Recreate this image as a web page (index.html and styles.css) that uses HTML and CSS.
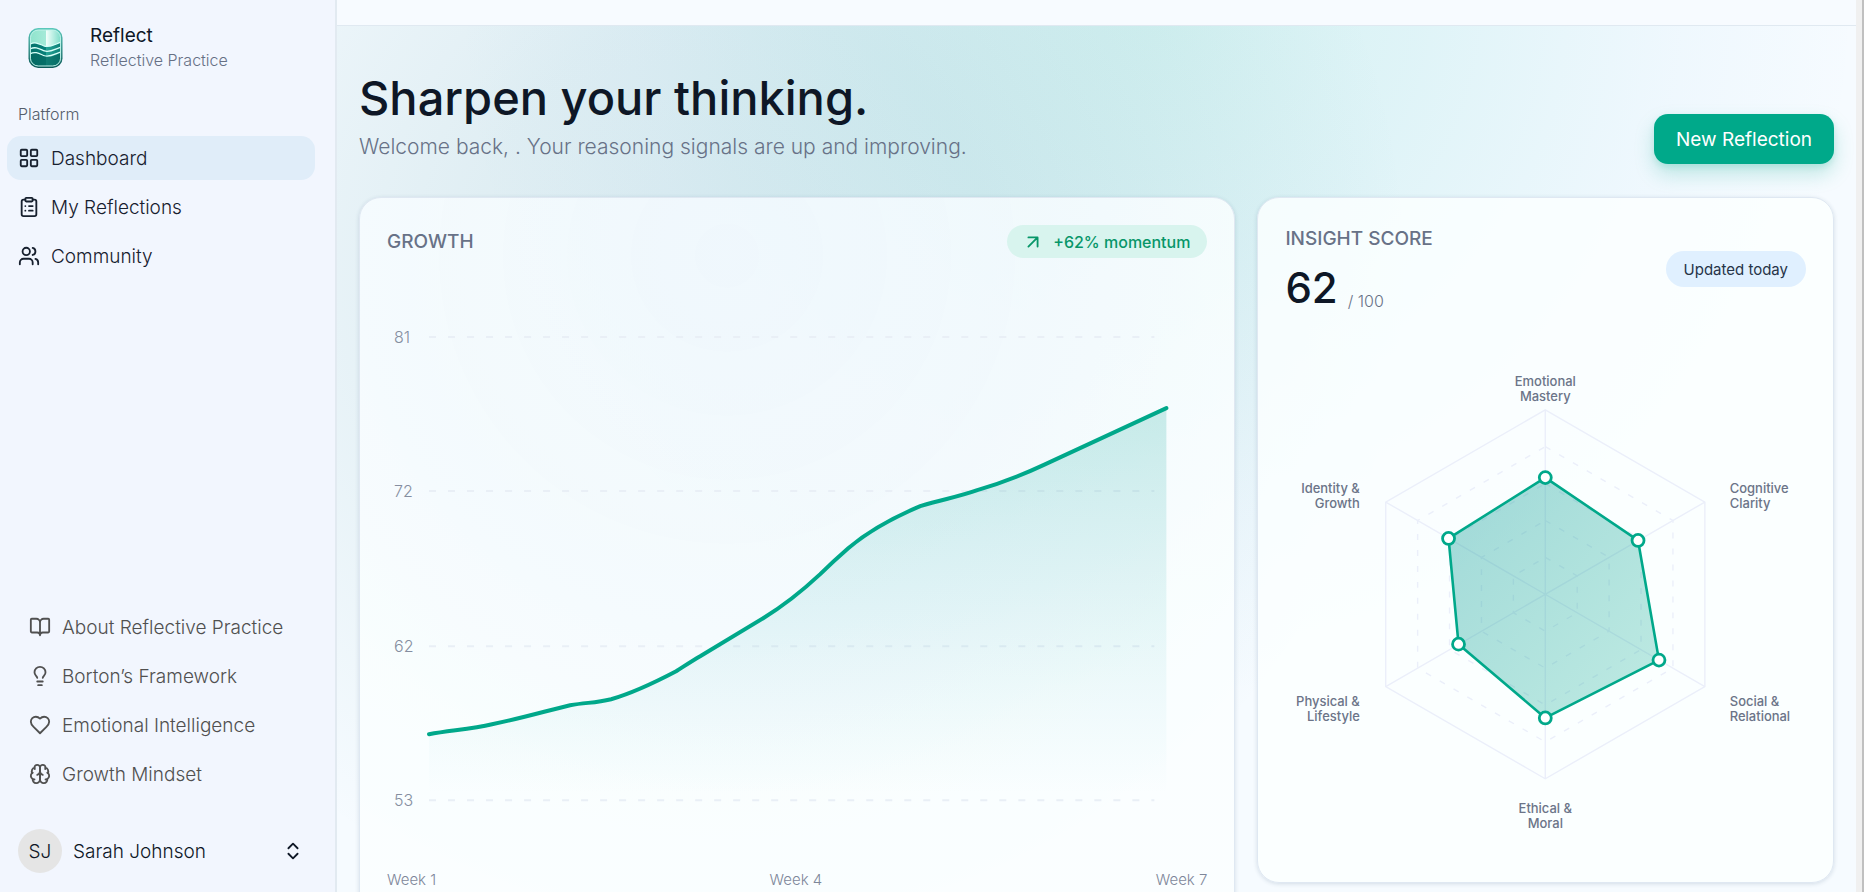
FILE: index.html
```html
<!DOCTYPE html>
<html lang="en">
<head>
<meta charset="utf-8">
<meta name="viewport" content="width=device-width, initial-scale=1">
<title>Reflect – Dashboard</title>
<link rel="stylesheet" href="styles.css">
</head>
<body>
<div class="app">
  <aside class="sidebar">
    <div class="brand">
      <svg class="brand-logo" viewBox="0 0 36 42" aria-hidden="true">
        <defs>
          <linearGradient id="frame" x1="0" y1="0" x2="0" y2="1"><stop offset="0" stop-color="#5cc9bc"/><stop offset="1" stop-color="#0a5a58"/></linearGradient>
          <linearGradient id="sky" x1="0" y1="0" x2="1" y2="0"><stop offset="0" stop-color="#8fe3cc"/><stop offset=".5" stop-color="#a4ead8"/><stop offset=".52" stop-color="#f2fffb"/><stop offset="1" stop-color="#7bdcc8"/></linearGradient>
          <linearGradient id="sea" x1="0" y1="0" x2="1" y2="0"><stop offset="0" stop-color="#05716a"/><stop offset=".5" stop-color="#07817a"/><stop offset=".52" stop-color="#26a497"/><stop offset="1" stop-color="#0b8077"/></linearGradient>
          <clipPath id="pane"><rect x="2.500" y="2.500" width="31" height="37" rx="8"/></clipPath>
        </defs>
        <rect x=".5" y=".5" width="35" height="41" rx="10" fill="url(#frame)"/>
        <g clip-path="url(#pane)">
          <rect x="2" y="2" width="32" height="38" fill="url(#sky)"/>
          <path d="M2 17c6-3 10 0 15 2s11-2 17-4v26H2z" fill="url(#sea)"/>
          <path d="M2 28c6-3 10-1 15 1s11 0 17-3v15H2z" fill="#056660" opacity=".65"/>
          <g fill="none" stroke="#d9fff8" stroke-width="1.300">
            <path d="M2 17c6-3 10 0 15 2s11-2 17-4"/>
            <path d="M2 22c6-3 10 0 15 2s11-2 17-4"/>
            <path d="M2 27c6-3 10 0 15 2s11-2 17-4"/>
          </g>
        </g>
        <rect x="2.500" y="2.500" width="31" height="37" rx="8" fill="none" stroke="#c3f4eb" stroke-width="1"/>
      </svg>
      <div class="brand-text">
        <div class="brand-name">Reflect</div>
        <div class="brand-tag">Reflective Practice</div>
      </div>
    </div>

    <div class="nav-label">Platform</div>
    <nav class="nav" aria-label="Platform">
      <a class="nav-item active" href="#dashboard">
        <svg class="icon" viewBox="0 0 24 24"><rect x="3" y="3" width="7" height="7" rx="1"/><rect x="14" y="3" width="7" height="7" rx="1"/><rect x="14" y="14" width="7" height="7" rx="1"/><rect x="3" y="14" width="7" height="7" rx="1"/></svg>
        Dashboard
      </a>
      <a class="nav-item" href="#reflections">
        <svg class="icon" viewBox="0 0 24 24"><rect x="8" y="2" width="8" height="4" rx="1"/><path d="M16 4h2a2 2 0 0 1 2 2v14a2 2 0 0 1-2 2H6a2 2 0 0 1-2-2V6a2 2 0 0 1 2-2h2M12 11h4M12 16h4M8 11h.01M8 16h.01"/></svg>
        My Reflections
      </a>
      <a class="nav-item" href="#community">
        <svg class="icon" viewBox="0 0 24 24"><path d="M16 21v-2a4 4 0 0 0-4-4H6a4 4 0 0 0-4 4v2"/><circle cx="9" cy="7" r="4"/><path d="M22 21v-2a4 4 0 0 0-3-3.870M16 3.130a4 4 0 0 1 0 7.750"/></svg>
        Community
      </a>
    </nav>

    <nav class="nav nav-secondary" aria-label="Resources">
      <a class="nav-item" href="#about">
        <svg class="icon" viewBox="0 0 24 24"><path d="M12 7v14M3 18a1 1 0 0 1-1-1V4a1 1 0 0 1 1-1h5a4 4 0 0 1 4 4 4 4 0 0 1 4-4h5a1 1 0 0 1 1 1v13a1 1 0 0 1-1 1h-6a3 3 0 0 0-3 3 3 3 0 0 0-3-3z"/></svg>
        About Reflective Practice
      </a>
      <a class="nav-item" href="#borton">
        <svg class="icon" viewBox="0 0 24 24"><path d="M15 14c.2-1 .7-1.700 1.500-2.500 1-.9 1.500-2.200 1.500-3.500A6 6 0 0 0 6 8c0 1 .2 2.200 1.500 3.500.7.7 1.300 1.500 1.500 2.500M9 18h6M10 22h4"/></svg>
        Borton’s Framework
      </a>
      <a class="nav-item" href="#emotional">
        <svg class="icon" viewBox="0 0 24 24"><path d="M19 14c1.490-1.460 3-3.210 3-5.500A5.500 5.500 0 0 0 16.500 3c-1.760 0-3 .5-4.500 2-1.500-1.500-2.740-2-4.500-2A5.500 5.500 0 0 0 2 8.500c0 2.300 1.500 4.050 3 5.500l7 7Z"/></svg>
        Emotional Intelligence
      </a>
      <a class="nav-item" href="#growth">
        <svg class="icon" viewBox="0 0 24 24"><path d="M12 5a3 3 0 1 0-5.997.125 4 4 0 0 0-2.526 5.770 4 4 0 0 0 .556 6.588A4 4 0 1 0 12 18Z"/><path d="M12 5a3 3 0 1 1 5.997.125 4 4 0 0 1 2.526 5.770 4 4 0 0 1-.556 6.588A4 4 0 1 1 12 18Z"/><path d="M15 13a4.500 4.500 0 0 1-3-4 4.500 4.500 0 0 1-3 4M17.599 6.500a3 3 0 0 0 .399-1.375M6.003 5.125A3 3 0 0 0 6.401 6.500M3.477 10.896a4 4 0 0 1 .585-.396M19.938 10.500a4 4 0 0 1 .585.396M6 18a4 4 0 0 1-1.967-.516M19.967 17.484A4 4 0 0 1 18 18"/></svg>
        Growth Mindset
      </a>
    </nav>

    <button class="user" type="button">
      <span class="avatar">SJ</span>
      <span class="user-name">Sarah Johnson</span>
      <svg class="icon" viewBox="0 0 24 24"><path d="m7 15 5 5 5-5M7 9l5-5 5 5"/></svg>
    </button>
  </aside>

  <main class="main">
    <div class="topbar"></div>
    <div class="content">
      <header class="hero">
        <div>
          <h1 class="hero-title">Sharpen your thinking.</h1>
          <p class="hero-sub">Welcome back, . Your reasoning signals are up and improving.</p>
        </div>
        <button class="cta" type="button">New Reflection</button>
      </header>

      <div class="cards">
        <section class="card card-growth">
          <div class="card-head">
            <h2 class="card-title">GROWTH</h2>
            <span class="pill pill-green">
              <svg class="pill-icon" viewBox="0 0 24 24"><path d="M7 7h10v10M7 17 17 7"/></svg>
              +62% momentum
            </span>
          </div>
          <svg class="growth-chart" viewBox="0 0 820 604" role="img" aria-label="Growth over seven weeks">
            <defs>
              <linearGradient id="area" x1="0" y1="0" x2="0" y2="1"><stop offset="0" stop-color="#00a08f" stop-opacity=".19"/><stop offset="1" stop-color="#20a8c0" stop-opacity="0"/></linearGradient>
            </defs>
            <g class="grid-lines"><path d="M42 72H767M42 226H767M42 381H767M42 535H767"/></g>
            <g class="axis-text"><text x="7" y="78">81</text><text x="7" y="232">72</text><text x="7" y="387">62</text><text x="7" y="541">53</text></g>
            <path fill="url(#area)" d="M42 469C64 465 84 464 105 459C135 453 158 446 183 440C200 437 208 438 224 434C248 427 270 416 289 406C300 399 306 395 313 391L376 353Q404 336 433 309Q446 296 461 283C480 267 507 252 533 241C556 234 570 232 590 225Q624 215 656 200L779 143V530H42Z"/>
            <path class="growth-line" d="M42 469C64 465 84 464 105 459C135 453 158 446 183 440C200 437 208 438 224 434C248 427 270 416 289 406C300 399 306 395 313 391L376 353Q404 336 433 309Q446 296 461 283C480 267 507 252 533 241C556 234 570 232 590 225Q624 215 656 200L779 143"/>
          </svg>
          <div class="weeks"><span>Week 1</span><span>Week 4</span><span>Week 7</span></div>
        </section>

        <section class="card">
          <div class="card-head">
            <div>
              <h2 class="card-title">INSIGHT SCORE</h2>
              <div class="score"><span class="score-value">62</span><span class="score-max">/ 100</span></div>
            </div>
            <span class="pill pill-blue">Updated today</span>
          </div>
          <svg class="radar" viewBox="-261 -261 522 522" role="img" aria-label="Insight score by dimension">
            <defs>
              <linearGradient id="radarFill" x1="0" y1="0" x2="1" y2="1"><stop offset="0" stop-color="#0c9a98" stop-opacity=".38"/><stop offset="1" stop-color="#00a88a" stop-opacity=".24"/></linearGradient>
            </defs>
            <g class="radar-grid">
              <polygon points="0,-185 160,-92.500 160,92.500 0,185 -160,92.500 -160,-92.500"/>
              <path d="M0-185V185M160-92.500-160 92.500M160 92.500-160-92.500"/>
              <g class="radar-rings">
                <polygon points="0,-148 128,-74 128,74 0,148 -128,74 -128,-74"/>
                <polygon points="0,-111 96,-55.500 96,55.500 0,111 -96,55.500 -96,-55.500"/>
                <polygon points="0,-74 64,-37 64,37 0,74 -64,37 -64,-37"/>
                <polygon points="0,-37 32,-18.500 32,18.500 0,37 -32,18.500 -32,-18.500"/>
              </g>
            </g>
            <polygon class="radar-shape" fill="url(#radarFill)" points="0,-117 93,-54 114,66 0,124 -87,50 -97,-56"/>
            <g class="radar-dots"><circle cx="0" cy="-117" r="6"/><circle cx="93" cy="-54" r="6"/><circle cx="114" cy="66" r="6"/><circle cx="0" cy="124" r="6"/><circle cx="-87" cy="50" r="6"/><circle cx="-97" cy="-56" r="6"/></g>
            <g class="radar-text">
              <text text-anchor="middle"><tspan x="0" y="-209">Emotional</tspan><tspan x="0" y="-194">Mastery</tspan></text>
              <text><tspan x="185" y="-102">Cognitive</tspan><tspan x="185" y="-87">Clarity</tspan></text>
              <text><tspan x="185" y="112">Social &amp;</tspan><tspan x="185" y="127">Relational</tspan></text>
              <text text-anchor="middle"><tspan x="0" y="219">Ethical &amp;</tspan><tspan x="0" y="234">Moral</tspan></text>
              <text text-anchor="end"><tspan x="-186" y="112">Physical &amp;</tspan><tspan x="-186" y="127">Lifestyle</tspan></text>
              <text text-anchor="end"><tspan x="-186" y="-102">Identity &amp;</tspan><tspan x="-186" y="-87">Growth</tspan></text>
            </g>
          </svg>
        </section>
      </div>
    </div>
  </main>
  <div class="scroll-track"></div>
</div>
</body>
</html>
```
FILE: styles.css
```css
* { box-sizing: border-box; }

body {
  margin: 0;
  font-family: Inter, "Open Sans", sans-serif;
  font-weight: 300;
  color: #0e1726;
  background: #f6fbff;
}

h1, h2, p { margin: 0; }

button {
  font: inherit;
  color: inherit;
  border: 0;
  background: none;
  cursor: pointer;
}

.app {
  display: flex;
  height: 100vh;
  overflow: hidden;
}

/* Sidebar */

.sidebar {
  display: flex;
  flex-direction: column;
  flex: 0 0 337px;
  padding: 21px 20px 19px 7px;
  background: #f2f6fe;
  border-right: 2px solid #e2eaf1;
}

.brand {
  display: flex;
  align-items: flex-end;
  gap: 27px;
  padding: 0 21px;
}

.brand-logo { width: 35px; height: 42px; margin-bottom: 1px; }

.brand-name {
  font-size: 19px;
  font-weight: 400;
  line-height: 30px;
}

.brand-tag {
  font-size: 16px;
  line-height: 19px;
  color: #667085;
}

.nav-label {
  padding: 0 11px;
  margin: 32px 0 10px;
  font-size: 16px;
  line-height: 24px;
  color: #555d6b;
}

.nav {
  display: flex;
  flex-direction: column;
  gap: 5px;
}

.nav-item {
  display: flex;
  align-items: center;
  gap: 11px;
  height: 44px;
  padding: 0 11px;
  border-radius: 14px;
  font-size: 19px;
  color: #17202e;
  text-decoration: none;
  white-space: nowrap;
}

.nav-item.active { background: #e0edf9; }

.icon {
  width: 22px;
  height: 22px;
  flex: none;
  fill: none;
  stroke: currentColor;
  stroke-width: 2;
  stroke-linecap: round;
  stroke-linejoin: round;
}

.nav-secondary {
  margin-top: auto;
  padding-left: 11px;
}

.nav-secondary .nav-item { color: #505050; }

.user {
  display: flex;
  align-items: center;
  gap: 11px;
  margin-top: 33px;
  padding: 0 11px;
  text-align: left;
}

.avatar {
  display: grid;
  place-items: center;
  width: 44px;
  height: 44px;
  border-radius: 50%;
  font-size: 19px;
  background: #e5e5e5;
}

.user-name { flex: 1; font-size: 19px; }

/* Main area */

.main {
  flex: 1;
  min-width: 0;
  overflow: hidden;
  background:
    radial-gradient(circle at 26% 30%, rgba(30, 125, 140, 0.12), rgba(30, 125, 140, 0.1) 260px, rgba(40, 130, 180, 0) 680px),
    radial-gradient(circle at 54% 0%, rgba(20, 190, 165, 0.15), rgba(20, 180, 180, 0.1) 260px, rgba(60, 170, 220, 0.04) 520px, rgba(60, 170, 240, 0) 700px),
    #f6fbff;
}

.topbar {
  height: 26px;
  background: #f7fbff;
  border-bottom: 1px solid #e0e9f1;
}

.content { padding: 42px 22px; }

.hero {
  display: flex;
  justify-content: space-between;
  align-items: flex-end;
  margin-bottom: 33px;
}

.hero-title {
  font-size: 47px;
  font-weight: 500;
  line-height: 60px;
}

.hero-sub {
  margin: 4px 0 2px;
  font-size: 21px;
  line-height: 30px;
  color: #687287;
}

.cta {
  height: 50px;
  padding: 0 22px;
  border-radius: 14px;
  font-size: 19px;
  font-weight: 400;
  color: #fff;
  background: #00a98a;
  box-shadow: 0 10px 20px rgba(0, 169, 138, 0.22), 0 3px 6px rgba(0, 169, 138, 0.14);
}

.cards {
  display: grid;
  grid-template-columns: 1.52fr 1fr;
  gap: 22px;
  align-items: start;
}

.card {
  padding: 27px;
  border: 1px solid #dfe8f2;
  border-radius: 22px;
  background: rgba(251, 255, 255, 0.84);
  box-shadow: 0 1px 4px rgba(30, 60, 100, 0.16);
}

.card-growth {
  background: radial-gradient(circle at 42% 8%, rgba(243, 250, 255, 0.88), rgba(247, 252, 255, 0.86) 320px, rgba(251, 255, 255, 0.86) 560px);
}

.card-head {
  display: flex;
  justify-content: space-between;
  align-items: center;
}

.card-title {
  font-size: 19px;
  font-weight: 500;
  line-height: 28px;
  color: #687287;
}

.pill {
  display: inline-flex;
  align-items: center;
  gap: 9px;
  border-radius: 18px;
  white-space: nowrap;
}

.pill-green {
  height: 33px;
  padding: 0 17px 0 15px;
  font-size: 16px;
  font-weight: 500;
  color: #079669;
  background: #d8f4ee;
}

.pill-icon {
  width: 22px;
  height: 22px;
  fill: none;
  stroke: currentColor;
  stroke-width: 2;
  stroke-linecap: round;
  stroke-linejoin: round;
}

.pill-blue {
  height: 36px;
  padding: 0 18px;
  font-size: 15px;
  font-weight: 400;
  color: #263448;
  background: #e0f0ff;
}

.growth-chart {
  display: block;
  width: 100%;
  height: auto;
  margin-top: 7px;
}

.grid-lines {
  fill: none;
  stroke: #e9eff6;
  stroke-width: 2;
  stroke-dasharray: 7 12;
}

.axis-text { font-size: 16px; fill: #858ea0; }

.growth-line {
  fill: none;
  stroke: #00a88a;
  stroke-width: 4;
  stroke-linecap: round;
  stroke-linejoin: round;
}

.weeks {
  display: flex;
  justify-content: space-between;
  font-size: 15px;
  line-height: 22px;
  color: #7e879a;
}

.score {
  display: flex;
  align-items: flex-end;
  gap: 10px;
  padding-top: 10px;
}

.score-value { font-size: 42px; font-weight: 500; line-height: 50px; }
.score-max { font-size: 16px; line-height: 24px; color: #687287; }

.radar {
  display: block;
  width: 100%;
  height: auto;
  margin-top: 21px;
}

.radar-grid { fill: none; stroke: #ebeffa; stroke-width: 1.4; }
.radar-rings { stroke-dasharray: 6 10; }
.radar-shape { stroke: #00a88a; stroke-width: 2.6; stroke-linejoin: round; }
.radar-dots { fill: #fff; stroke: #00a88a; stroke-width: 2.8; }
.radar-text { font-size: 13px; font-weight: 500; fill: #6b7488; }

.scroll-track {
  flex: 0 0 8px;
  background: #f0f0f0;
  border-right: 2px solid #c0c0c0;
}
```
